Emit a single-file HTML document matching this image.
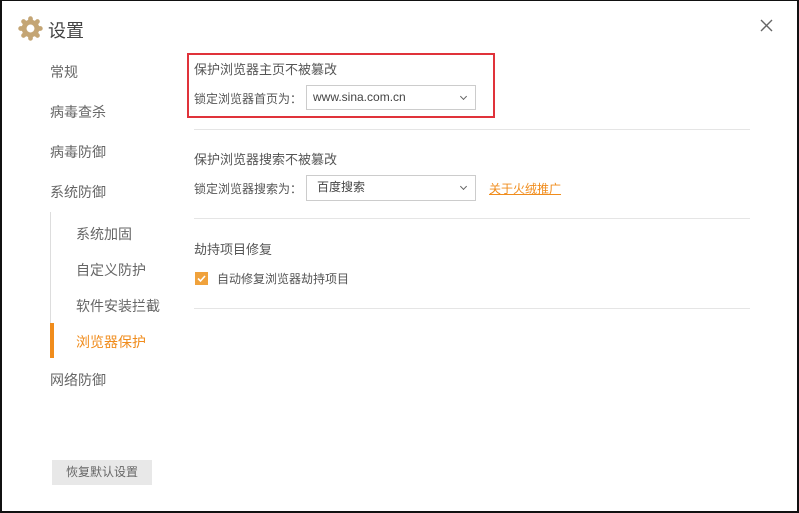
<!DOCTYPE html><html><head><meta charset="utf-8"><style>
*{margin:0;padding:0;box-sizing:border-box}
body{width:799px;height:513px;background:#fff;font-family:"Liberation Sans","Noto Sans CJK SC",sans-serif;position:relative;overflow:hidden}
.frame{position:absolute;left:0;top:0;width:799px;height:513px;border:2px solid #111;border-top-width:1px}
.a{position:absolute;white-space:nowrap}
.nav{font-size:14px;color:#666;left:50px}
.sub{font-size:14px;color:#666;left:76px}
.t{font-size:13px;color:#555;left:194px}
.l{font-size:12px;color:#555}
.sel{position:absolute;border:1px solid #ccc;background:#fff;font-size:12px;color:#444;padding-left:6px;line-height:23px}
.sel:after{content:"";position:absolute;right:9px;top:8px;width:4px;height:4px;border-right:1px solid #666;border-bottom:1px solid #666;transform:rotate(45deg)}
.hr{position:absolute;left:194px;width:556px;height:1px;background:#e5e5e5}
</style></head><body>
<div class="frame"></div>
<svg class="a" style="left:18px;top:16px" width="25" height="25" viewBox="0 0 24 24"><g fill="#c4a574"><circle cx="12" cy="12" r="8.5"/><g stroke="#c4a574" stroke-width="4.5" stroke-linecap="round"><path d="M12 2.5v19M2.5 12h19M5.3 5.3l13.4 13.4M18.7 5.3L5.3 18.7"/></g></g><circle cx="12" cy="12" r="3.8" fill="#fff"/></svg>
<div class="a" style="left:48px;top:17px;font-size:18px;color:#444">设置</div>
<svg class="a" style="left:760px;top:19px" width="13" height="13"><path d="M1 1l11 11M12 1L1 12" stroke="#666" stroke-width="1.4"/></svg>
<div class="a nav" style="top:62px">常规</div>
<div class="a nav" style="top:102px">病毒查杀</div>
<div class="a nav" style="top:142px">病毒防御</div>
<div class="a nav" style="top:182px">系统防御</div>
<div class="a" style="left:50px;top:212px;width:1px;height:146px;background:#ddd"></div>
<div class="a" style="left:50px;top:323px;width:4px;height:35px;background:#f08c1c"></div>
<div class="a sub" style="top:224px">系统加固</div>
<div class="a sub" style="top:260px">自定义防护</div>
<div class="a sub" style="top:296px">软件安装拦截</div>
<div class="a sub" style="top:332px;color:#f08c1c">浏览器保护</div>
<div class="a nav" style="top:370px">网络防御</div>
<div class="a" style="left:52px;top:460px;width:100px;height:25px;background:#e8e8e8;color:#666;font-size:12px;text-align:center;line-height:25px">恢复默认设置</div>
<div class="a" style="left:187px;top:53px;width:308px;height:65px;border:2px solid #e0323a"></div>
<div class="a t" style="top:59px">保护浏览器主页不被篡改</div>
<div class="a l" style="left:194px;top:90px">锁定浏览器首页为：</div>
<div class="sel" style="left:306px;top:85px;width:170px;height:25px">www.sina.com.cn</div>
<div class="hr" style="top:129px"></div>
<div class="a t" style="top:149px">保护浏览器搜索不被篡改</div>
<div class="a l" style="left:194px;top:180px">锁定浏览器搜索为：</div>
<div class="sel" style="left:306px;top:175px;width:170px;height:26px;padding-left:10px">百度搜索</div>
<div class="a" style="left:489px;top:180px;font-size:12px;color:#f08c1c;text-decoration:underline">关于火绒推广</div>
<div class="hr" style="top:218px"></div>
<div class="a t" style="top:239px">劫持项目修复</div>
<div class="a" style="left:195px;top:272px;width:13px;height:13px;background:#f0a23c"></div>
<svg class="a" style="left:195px;top:272px" width="13" height="13"><path d="M3 6.5l2.5 2.5 4.5-5" stroke="#fff" stroke-width="1.6" fill="none"/></svg>
<div class="a l" style="left:217px;top:270px">自动修复浏览器劫持项目</div>
<div class="hr" style="top:308px"></div>
</body></html>
